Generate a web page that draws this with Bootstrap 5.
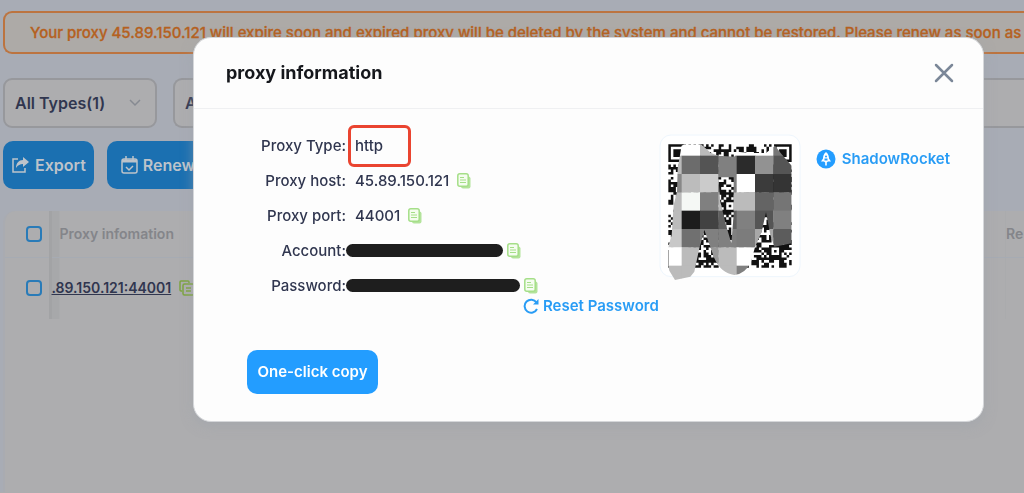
<!DOCTYPE html>
<html lang="en">
<head>
<meta charset="utf-8">
<meta name="viewport" content="width=device-width, initial-scale=1">
<title>Proxy information</title>
<link href="https://cdn.jsdelivr.net/npm/bootstrap@5.3.0/dist/css/bootstrap.min.css" rel="stylesheet">
<style>
  html, body { height: 100%; }
  body { background: #adadaf; color: #30364f; font: 500 15px/20px Inter, "Open Sans", sans-serif; overflow: hidden; }
  .top-band { background: #a8acb5; padding: 11px 0 22px 3px; }
  .notice { border: 2px solid #bc7440; border-right: 0; border-radius: 9px 0 0 9px; background: #adaaa7; color: #b5611f; font-weight: 500; -webkit-text-stroke: .3px #b5611f; height: 43px; padding-left: 25px; white-space: nowrap; overflow: hidden; }
  .filters { margin-top: 24px; }
  .picker { width: 154px; height: 50px; border: 2px solid #97989c; border-radius: 9px; background: #adadaf; font-weight: 600; font-size: 16px; color: #30364f; padding: 0 14px 0 10px; }
  select.picker { appearance: none; background: #adadaf url("data:image/svg+xml,%3Csvg xmlns='http://www.w3.org/2000/svg' width='12' height='8' fill='none' stroke='%23868a92' stroke-width='1.5'%3E%3Cpath d='M1 1l5 5 5-5'/%3E%3C/svg%3E") no-repeat right 14px center; }
  .wide-picker { flex: 1 0 0; border-right: 0; border-radius: 9px 0 0 9px; }
  .actions { margin-top: 13px; gap: 13px; }
  .act { height: 48px; border-radius: 10px; background: #1b70b1; color: #bdc3ca; font-weight: 600; font-size: 16px; border: 0; gap: 5px; }
  .act-renew { padding: 0 14px; }
  .panel-list { padding-left: 3px; background: #a8acb5; }
  .sheet { background: #adadaf; border-left: 2px solid #a9abb1; border-radius: 12px 0 0 0; min-height: 281px; }
  .sheet table { width: 100%; table-layout: fixed; border-collapse: collapse; }
  .sheet th { height: 46px; color: #84858a; font-weight: 600; font-size: 14px; border-bottom: 1px solid #a6abb3; padding: 0; vertical-align: middle; }
  .sheet td { height: 62px; font-weight: 600; font-size: 14px; padding: 0; white-space: nowrap; }
  .pick-col { width: 45px; }
  .end-col { width: 18px; }
  .sheet .pick-cell { padding-left: 21px; border-right: 3px solid #a2a3a5; }
  .sheet .info-cell { background: linear-gradient(90deg, #a7a8aa 8px, transparent 8px); }
  .tick { appearance: none; display: block; width: 16px; height: 16px; border: 2px solid #297bb8; border-radius: 4px; margin: 0; }
  .veil { position: fixed; inset: 0; padding: 37px 40px 0 193px; }
  .sheet-box { background: #fdfdfd; border: 1px solid #d5d7da; border-radius: 18px; padding-bottom: 27px; box-shadow: 0 4px 12px #9ea4ab80; }
  .box-head { height: 71px; padding: 0 29px 0 32px; border-bottom: 1px solid #eff0f2; }
  .box-head h1 { font-size: 18px; line-height: 24px; font-weight: 700; color: #15171c; margin: 0; }
  .icon-btn { border: 0; background: none; padding: 0; line-height: 0; display: block; }
  .facts-col { flex: 0 0 464px; }
  .facts { display: grid; grid-template-columns: 93px auto; grid-auto-rows: 35px; align-items: center; margin: 19px 0 0 59px; }
  .facts dt { font-weight: 500; text-align: right; white-space: nowrap; }
  .facts dd { margin: 0; padding-left: 9px; display: flex; align-items: center; gap: 8px; }
  .facts .ringed { padding-left: 2px; }
  .ring { border: 3px solid #ea4430; border-radius: 6px; width: 63px; height: 42px; padding-left: 4px; line-height: 36px; }
  .facts .hidden-value { padding-left: 0; gap: 4px; }
  .ink { background: #1e1e1e; border-radius: 7px; height: 13px; width: 157px; }
  .ink-long { width: 174px; }
  .blue-link { display: flex; align-items: center; color: #289cf5; text-decoration: none; font-weight: 600; white-space: nowrap; }
  .reset { margin: -7px 0 0 329px; gap: 4px; }
  .copy-all { background: #239dff; color: #fff; font-weight: 600; border: 0; border-radius: 10px; width: 131px; height: 44px; margin: 34px 0 0 53px; white-space: nowrap; padding: 0; }
  .code { margin-top: 24px; }
  .rocket { margin: 40px 0 0 13px; gap: 6px; }
</style>
</head>
<body>
<svg class="d-none" aria-hidden="true">
  <symbol id="doc" viewBox="0 0 14 16"><path d="M4 3.500h7.500q2 0 2 2V13.500q0 2-2 2H6q-2 0-2-2z" fill="#b3e39b"/><rect x=".8" y=".8" width="10.400" height="12.400" rx="2" fill="#f5fdf0" stroke="#a5df88" stroke-width="1.500"/><path d="M3 4.500h4M3 7h6M3 9.500h6" stroke="#a5df88" stroke-width="1.200"/></symbol>
</svg>
<main>
  <div class="top-band">
    <div class="notice d-flex align-items-center">Your proxy 45.89.150.121 will expire soon and expired proxy will be deleted by the system and cannot be restored. Please renew as soon as</div>
    <div class="filters d-flex">
      <select class="picker" aria-label="Type"><option>All Types(1)</option></select>
      <button class="picker wide-picker text-start ms-3">A</button>
    </div>
    <div class="actions d-flex">
      <button class="act d-flex align-items-center px-2">
        <svg width="19" height="18" viewBox="0 0 19 18" fill="none" stroke="currentColor" stroke-width="1.500"><path d="M7 3H2v13h12v-4"/><path d="M12 1l6 5-6 5V8C9 8 7 9 5 12c0-5 3-8 7-8z" fill="currentColor" stroke="none"/></svg>Export</button>
      <button class="act act-renew d-flex align-items-center">
        <svg width="17" height="18" viewBox="0 0 17 18" fill="none" stroke="currentColor" stroke-width="1.500"><rect x="1" y="3" width="15" height="14" rx="2"/><path d="M1 5h15" stroke-width="3"/><path d="M5 0v4M12 0v4M5 11l3 3 4-4"/></svg>Renew</button>
    </div>
  </div>
  <div class="panel-list"><div class="sheet">
    <table>
      <colgroup><col class="pick-col"><col><col class="end-col"></colgroup>
      <thead><tr><th class="pick-cell"><input type="checkbox" class="tick" aria-label="Select all"></th><th class="info-cell ps-2">Proxy infomation</th><th>Re</th></tr></thead>
      <tbody><tr><td class="pick-cell"><input type="checkbox" class="tick" aria-label="Select proxy"></td><td class="info-cell"><div class="d-flex align-items-center"><a href="#" class="text-reset">.89.150.121:44001</a><button class="icon-btn ms-2" aria-label="Copy"><svg width="16" height="16" viewBox="0 0 16 16" fill="none" stroke="#7da440" stroke-width="1.500"><path d="M3 11H2q-1 0-1-1V2q0-1 1-1h7q1 0 1 1v1"/><rect x="4" y="4" width="11" height="11" rx="1.500"/><path d="M7 8h5M7 11h5"/></svg></button></div></td><td></td></tr></tbody>
    </table>
  </div></div>
</main>
<div class="veil"><section class="sheet-box" role="dialog" aria-labelledby="box-title">
  <header class="box-head d-flex align-items-center justify-content-between">
    <h1 id="box-title">proxy information</h1>
    <button class="icon-btn" aria-label="Close"><svg width="20" height="20" viewBox="0 0 20 20" stroke="#7b8798" stroke-width="2.500" stroke-linecap="round"><path d="M2 2l16 16M18 2L2 18"/></svg></button>
  </header>
  <div class="d-flex align-items-start">
    <div class="facts-col">
      <dl class="facts">
        <dt>Proxy Type:</dt><dd class="ringed"><span class="ring">http</span></dd>
        <dt>Proxy host:</dt><dd>45.89.150.121 <button class="icon-btn" aria-label="Copy host"><svg width="14" height="16"><use href="#doc"/></svg></button></dd>
        <dt>Proxy port:</dt><dd>44001 <button class="icon-btn" aria-label="Copy port"><svg width="14" height="16"><use href="#doc"/></svg></button></dd>
        <dt>Account:</dt><dd class="hidden-value"><span class="ink"></span><button class="icon-btn" aria-label="Copy account"><svg width="14" height="16"><use href="#doc"/></svg></button></dd>
        <dt>Password:</dt><dd class="hidden-value"><span class="ink ink-long"></span><button class="icon-btn" aria-label="Copy password"><svg width="14" height="16"><use href="#doc"/></svg></button></dd>
      </dl>
      <a href="#" class="blue-link reset"><svg class="flex-shrink-0" width="16" height="16" viewBox="0 0 16 16" fill="none" stroke="#289cf5" stroke-width="2"><path d="M13.500 4.500A6.500 6.500 0 1 0 14 11"/><path d="M15.500 1v5.500H10z" fill="#289cf5" stroke="none"/></svg>Reset Password</a>
      <button class="copy-all">One-click copy</button>
    </div>
    <svg class="code flex-shrink-0" width="144" height="152" viewBox="24 24 432 456" role="img" aria-label="QR code">
      <defs><clipPath id="smear"><path clip-rule="evenodd" d="M72 465L55 437 52 422V365L62 330 68 240 78 200 80 130 92 62 100 58H150L180 84 202 92 250 95 257 80 300 84 345 84 372 62 392 88 422 122V355L370 365 358 330 345 262 332 320 312 367 300 410Q285 445 250 450 210 445 190 400L160 315 145 370 130 440 118 455zM202 157H248V270L241 355 225 300 208 230z"/></clipPath></defs>
      <rect x="27" y="30" width="420" height="425" rx="33" fill="#fff" stroke="#eef6fd" stroke-width="3"/>
      <path id="modules" fill="#111"/>
      <g id="mosaic" clip-path="url(#smear)"></g>
    </svg>
    <a href="#" class="blue-link rocket"><svg width="20" height="20" viewBox="0 0 20 20"><circle cx="10" cy="10" r="9.500" fill="#239dff"/><path d="M10 3C7.500 5 7 7.500 7 9.500L5 12.500h3l1.200 1V16.500h1.600V13.500l1.200-1h3L13 9.500C13 7.500 12.500 5 10 3z" fill="#fff"/><path d="M8.500 9.500h3v2h-3z" fill="#239dff"/><circle cx="10" cy="7.500" r="1" fill="#239dff"/></svg>ShadowRocket</a>
  </div>
</section></div>
<script src="https://cdn.jsdelivr.net/npm/bootstrap@5.3.0/dist/js/bootstrap.bundle.min.js"></script>
<script>
  const count = 49, step = 370 / count, left = 52, top0 = 58;
  const marks = [[0, 0, 7], [42, 0, 7], [0, 42, 7], [22, 22, 5], [40, 40, 5]];
  let seed = 17, d = '';
  for (let r = 0; r < count; r++) for (let c = 0; c < count; c++) {
    seed = (seed * 1103515245 + 12345) % 2147483648;
    let dark = (seed / 2147483648) < 0.55;
    for (const [mx, my, size] of marks) {
      const h = (size - 1) / 2, ring = Math.max(Math.abs(c - mx - h), Math.abs(r - my - h));
      if (ring <= h + (size === 7 ? 1 : 0)) dark = ring <= h && ring !== h - 1;
    }
    if (dark) d += `M${left + c * step} ${top0 + r * step}h${step}v${step}h-${step}z`;
  }
  document.getElementById('modules').setAttribute('d', d);
  const shades = [
    ['fff', 'fff', 'bbb', 'fff', 'fff', 'fff', '777'],
    ['bbb', '6c6c6c', '545454', '808080', '2b2b2b', '929292', '555'],
    ['888', 'bcbcbc', 'cbcbcb', '7f7f7f', 'fff', '3b3b3b', '343434'],
    ['bbb', 'f5f8f5', '808080', 'bbb', 'bbb', '646464', '757575'],
    ['bbb', '1c1c1c', '424242', '606060', '808080', '555', '808080'],
    ['c8c8c8', '707070', '808080', '808080', '7c7c7c', 'a8a8a8', '5c5c5c'],
    ['fff', 'bbb', '999', 'bbb', 'fff', 'fff', '888'],
    ['bbb', 'bbb', 'bbb', 'bbb', '808080', '808080', '808080']];
  document.getElementById('mosaic').innerHTML = shades.map((line, r) => line.map((s, c) =>
    `<rect x="${37 + c * 55}" y="${37 + r * 55}" width="56" height="56" fill="#${s}"/>`).join('')).join('');
</script>
</body>
</html>
